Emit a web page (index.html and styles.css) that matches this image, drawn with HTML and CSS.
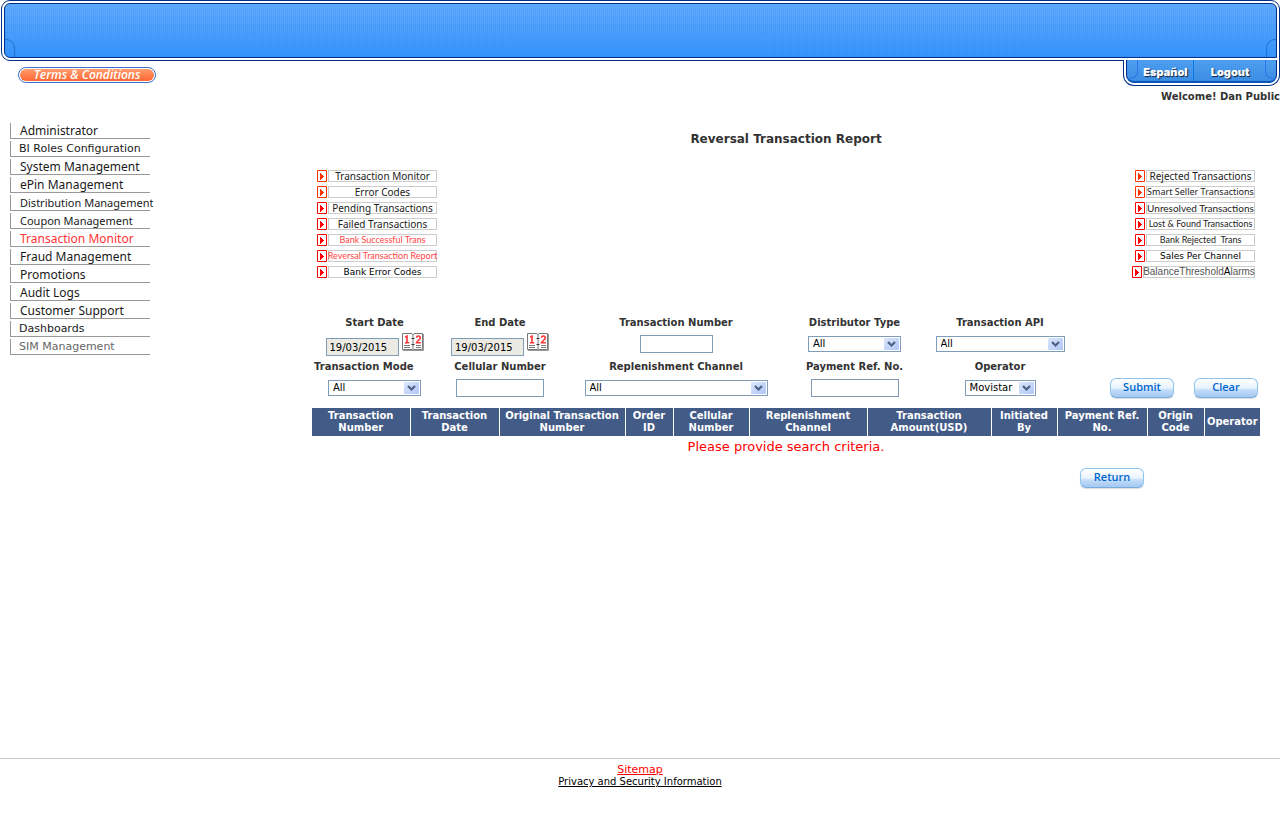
FILE: index.html
```html
<!DOCTYPE html>
<html lang="en">
<head>
<meta charset="utf-8">
<title>Reversal Transaction Report</title>
<link rel="stylesheet" href="styles.css">
</head>
<body>
<svg class="defs" aria-hidden="true">
  <symbol id="play" viewBox="0 0 10 12"><path d="M.5.5h9v11h-9z" fill="#fff" stroke="currentColor"/><path d="M3 3h1v1h1v1h1v1h1v1h-1v1h-1v1h-1v1h-1z" fill="currentColor"/></symbol>
  <symbol id="chevron" viewBox="0 0 15 12"><rect width="15" height="12" rx="1" fill="url(#arrow-face)"/><path d="M4 4l3.500 3.500L11 4" fill="none" stroke="#4d6185" stroke-width="2.200"/></symbol>
  <symbol id="calendar" viewBox="0 0 22 18">
    <path d="M1 17.500h20.500V1" fill="none" stroke="#999"/>
    <path d="M.5.5h9.500l1 1 1-1h8.500v16h-8.500l-1 1-1-1H.5z" fill="#fff" stroke="#777"/>
    <path d="M11 1v16" stroke="#777"/><path d="M9.500 5.500h3M9.500 11.500h3" stroke="#333"/>
    <path d="M3.200 4.300L5 3.200V9.500M3 9.700h4.200" fill="none" stroke="#f33" stroke-width="1.600"/>
    <path d="M14.500 4.800c.2-2.500 4-2.200 3.800.2C18.200 6.700 15 8 14.500 9.700h4.300" fill="none" stroke="#f33" stroke-width="1.600"/>
    <path d="M2 12.500h6M2 14.500h6M14 12.500h5M14 14.500h5" stroke="#777"/>
  </symbol>
  <linearGradient id="arrow-face" x2="1" y2="1"><stop stop-color="#dce6fd"/><stop offset="1" stop-color="#aec6f6"/></linearGradient>
</svg>
<header class="top">
  <div class="banner"><div class="banner-fill"><i class="notch notch-left"></i><i class="notch notch-right"></i></div></div>
  <div class="subbar">
    <a class="terms" href="#"><span>Terms &amp; Conditions</span></a>
    <div class="account">
      <nav class="tabs"><div class="tabs-fill"><a href="#">Español</a><a href="#">Logout</a></div></nav>
      <p class="welcome">Welcome! Dan Public</p>
    </div>
  </div>
</header>
<div class="layout">
  <nav class="menu">
    <a href="#">Administrator</a>
    <a href="#" class="wide">BI Roles Configuration</a>
    <a href="#">System Management</a>
    <a href="#">ePin Management</a>
    <a href="#" class="narrow">Distribution Management</a>
    <a href="#" class="narrow">Coupon Management</a>
    <a href="#" class="current">Transaction Monitor</a>
    <a href="#">Fraud Management</a>
    <a href="#">Promotions</a>
    <a href="#">Audit Logs</a>
    <a href="#">Customer Support</a>
    <a href="#" class="wide">Dashboards</a>
    <a href="#" class="wide muted">SIM Management</a>
  </nav>
  <main>
    <h1>Reversal Transaction Report</h1>
    <div class="shortcuts">
      <nav class="links">
        <a href="#" class="warm"><svg><use href="#play"/></svg><span>Transaction Monitor</span></a>
        <a href="#" class="warm"><svg><use href="#play"/></svg><span>Error Codes</span></a>
        <a href="#"><svg><use href="#play"/></svg><span>Pending Transactions</span></a>
        <a href="#"><svg><use href="#play"/></svg><span>Failed Transactions</span></a>
        <a href="#"><svg><use href="#play"/></svg><span class="slim active">Bank Successful Trans</span></a>
        <a href="#"><svg><use href="#play"/></svg><span class="slim active">Reversal Transaction Report</span></a>
        <a href="#"><svg><use href="#play"/></svg><span class="dark">Bank Error Codes</span></a>
      </nav>
      <nav class="links">
        <a href="#" class="warm"><svg><use href="#play"/></svg><span>Rejected Transactions</span></a>
        <a href="#" class="warm"><svg><use href="#play"/></svg><span class="small-text">Smart Seller Transactions</span></a>
        <a href="#"><svg><use href="#play"/></svg><span class="snug">Unresolved Transactions</span></a>
        <a href="#"><svg><use href="#play"/></svg><span class="slim">Lost &amp; Found Transactions</span></a>
        <a href="#"><svg><use href="#play"/></svg><span class="slim">Bank Rejected&nbsp; Trans</span></a>
        <a href="#"><svg><use href="#play"/></svg><span class="dark">Sales Per Channel</span></a>
        <a href="#" class="long"><svg><use href="#play"/></svg><span class="arial">BalanceThreshold<b>A</b>larms</span></a>
      </nav>
    </div>
    <form class="filters">
      <div class="field"><label for="start">Start Date</label><div class="control date"><input id="start" value="19/03/2015" readonly><button type="button" aria-label="Pick start date"><svg><use href="#calendar"/></svg></button></div></div>
      <div class="field"><label for="end">End Date</label><div class="control date"><input id="end" value="19/03/2015" readonly><button type="button" aria-label="Pick end date"><svg><use href="#calendar"/></svg></button></div></div>
      <div class="field"><label for="number">Transaction Number</label><div class="control"><input id="number"></div></div>
      <div class="field"><label for="type">Distributor Type</label><div class="control"><span class="select medium"><select id="type"><option>All</option></select><svg><use href="#chevron"/></svg></span></div></div>
      <div class="field"><label for="api">Transaction API</label><div class="control"><span class="select large"><select id="api"><option>All</option></select><svg><use href="#chevron"/></svg></span></div></div>
      <div class="field mode"><label for="mode">Transaction Mode</label><div class="control"><span class="select medium"><select id="mode"><option>All</option></select><svg><use href="#chevron"/></svg></span></div></div>
      <div class="field"><label for="cell">Cellular Number</label><div class="control"><input id="cell" class="roomy"></div></div>
      <div class="field"><label for="channel">Replenishment Channel</label><div class="control"><span class="select huge"><select id="channel"><option>All</option></select><svg><use href="#chevron"/></svg></span></div></div>
      <div class="field"><label for="payment">Payment Ref. No.</label><div class="control"><input id="payment" class="roomy"></div></div>
      <div class="field"><label for="operator">Operator</label><div class="control"><span class="select small"><select id="operator"><option>Movistar</option></select><svg><use href="#chevron"/></svg></span></div></div>
      <div class="actions"><button class="pill">Submit</button><button class="pill" type="reset">Clear</button></div>
    </form>
    <table class="results">
      <colgroup><col class="c98"><col class="c89"><col class="c126"><col class="c48"><col class="c76"><col class="c118"><col class="c124"><col class="c66"><col class="c90"><col class="c57"><col class="c56"></colgroup>
      <thead><tr><th>Transaction Number</th><th>Transaction Date</th><th>Original Transaction Number</th><th>Order ID</th><th>Cellular Number</th><th>Replenishment Channel</th><th>Transaction Amount(USD)</th><th>Initiated By</th><th>Payment Ref. No.</th><th>Origin Code</th><th>Operator</th></tr></thead>
      <tbody><tr><td colspan="11">Please provide search criteria.</td></tr></tbody>
    </table>
    <div class="back"><button class="pill">Return</button></div>
  </main>
</div>
<footer><a href="#" class="sitemap">Sitemap</a><a href="#">Privacy and Security Information</a></footer>
</body>
</html>
```
FILE: styles.css
```css
* { box-sizing: border-box; }
body { margin: 0; min-height: 100vh; display: flex; flex-direction: column; background: #fff; color: #333; font: 10px/12px Verdana, "DejaVu Sans", sans-serif; }
a { color: inherit; text-decoration: none; }
p, h1 { margin: 0; }
button { border: 0; padding: 0; background: none; font: inherit; cursor: pointer; }
svg { display: block; }
.defs { position: absolute; width: 0; height: 0; }

.banner { height: 61px; margin-left: 1px; padding: 2px; border: 1px solid #003087; border-radius: 9px 9px 0 9px; }
.banner-fill { position: relative; height: 55px; overflow: hidden; border: 1px solid #003087; border-radius: 6px 6px 0 6px; background: repeating-linear-gradient(90deg, rgba(20, 100, 215, .12) 0 1px, transparent 1px 2px), repeating-linear-gradient(rgba(20, 100, 215, .1) 0 1px, transparent 1px 2px), linear-gradient(#66b0ff, #3898ff); }
.notch { position: absolute; bottom: -1px; width: 11px; height: 19px; border: 1px solid #2372cf; }
.notch-left { left: -1px; border-radius: 0 9px 0 0; }
.notch-right { right: -1px; border-radius: 9px 0 0 0; }
.subbar { display: flex; justify-content: space-between; align-items: flex-start; height: 43px; }
.terms { width: 138px; margin: 6px 0 0 18px; padding: 1px; border: 1px solid #3b6fce; border-radius: 8px; }
.terms span { display: block; height: 12px; border-radius: 6px; background: linear-gradient(#ff9c6c, #ff6733); color: #fff; text-align: center; font: italic 600 12px/12px "Open Sans", sans-serif; }
.account { display: flex; flex-direction: column; align-items: flex-end; }
.tabs { position: relative; width: 157px; height: 26px; margin-top: -1px; padding: 0 2px 2px; border: 1px solid #003087; border-top: 0; border-radius: 0 0 11px 11px; background: #fff; }
.tabs-fill { display: flex; height: 23px; border: 1px solid #003087; border-top: 0; border-bottom: 2px solid #0c55b5; border-radius: 0 0 8px 8px; overflow: hidden; background: repeating-linear-gradient(90deg, rgba(20, 90, 200, .1) 0 1px, transparent 1px 2px), repeating-linear-gradient(rgba(20, 90, 200, .1) 0 1px, transparent 1px 2px), linear-gradient(#54a5f4, #4093e6); }
.tabs a { flex: 84px 0 0; padding-right: 12px; color: #fff; text-align: center; text-shadow: 1px 1px 1px #124; font: 900 11px/24px "Inter", "Liberation Sans", sans-serif; }
.tabs a:first-child { flex: 67px 0 0; padding: 0 0 0 11px; border-right: 1px solid #0b78e8; }
.tabs-fill::before, .tabs-fill::after { content: ""; position: absolute; top: 0; width: 10px; height: 18px; border: 1px solid #2b72f0; border-top: 0; }
.tabs-fill::before { left: 3px; border-left: 0; border-radius: 0 0 8px 0; }
.tabs-fill::after { right: 3px; border-right: 0; border-radius: 0 0 0 8px; }
.welcome { margin-top: 5px; font-weight: bold; }

.layout { flex: 1; display: flex; padding: 19px 20px 20px 10px; }
.menu { flex: 0 0 140px; min-width: 0; display: flex; flex-direction: column; gap: 2px; }
.menu a { height: 16px; padding-left: 9px; border: solid #999; border-width: 0 0 1px 1px; color: #1a1a1a; font: 12px/16px "Noto Sans", sans-serif; white-space: nowrap; }
.menu .wide { padding-left: 8px; font: 11px/15px Verdana, "DejaVu Sans", sans-serif; }
.menu .narrow { font-size: 11px; }
.menu .current { color: #f33; }
.menu .muted { color: #666; }
main { flex: 1; min-width: 0; margin-left: 162px; }
h1 { margin-top: 8px; text-align: center; font-size: 12px; line-height: 16px; }
.shortcuts { display: flex; justify-content: space-between; margin-top: 23px; padding: 0 5px; }
.links { width: 120px; display: flex; flex-direction: column; align-items: flex-end; gap: 4px; color: #222; }
.links a { width: 120px; height: 12px; display: flex; gap: 1px; white-space: nowrap; }
.links .long { width: 123px; }
.links svg { flex: none; width: 10px; height: 12px; color: #f00; }
.links .warm svg { color: #f30; }
.links span { flex: 1; min-width: 0; display: flex; justify-content: center; border: 1px solid #ccc; font: 10px/10px "Noto Sans", sans-serif; }
.links .small-text { font-size: 9px; }
.links .snug { font: 10px/10px Lato, sans-serif; }
.links .slim { font: 9px/10px Lato, sans-serif; }
.links .active { color: #f44; }
.links .dark { color: #000; font: 9px/11px Verdana, "DejaVu Sans", sans-serif; }
.links .arial { color: #555; font: 10px/10px "Liberation Sans", sans-serif; }
.arial b { color: #000; font-weight: normal; }

.filters { display: grid; grid-template-columns: 125fr 126fr 226fr 131fr 160fr 180fr; row-gap: 2px; margin-top: 38px; }
.field { display: flex; flex-direction: column; align-items: center; }
.field label { line-height: 14px; font-weight: bold; white-space: nowrap; }
.mode { grid-column: 1; }
.mode label { align-self: flex-start; margin-left: 2px; }
.control { height: 28px; display: flex; align-items: center; }
.date { align-items: flex-start; gap: 3px; padding-top: 3px; }
.date input { margin-top: 5px; background: #ebebe4; }
.date svg { width: 22px; height: 18px; }
input { width: 73px; height: 18px; padding: 0 3px; border: 1px solid #7f9db9; border-radius: 0; background: #fff; color: #000; font: inherit; }
.roomy { width: 88px; }
.select { position: relative; display: block; }
.select svg { position: absolute; top: 2px; right: 2px; width: 15px; height: 12px; pointer-events: none; }
select { display: block; width: 100%; height: 16px; padding: 0 4px; border: 1px solid #7f9db9; border-radius: 0; appearance: none; background: #fff; color: #000; font: inherit; }
.small { width: 71px; }
.medium { width: 93px; }
.large { width: 129px; }
.huge { width: 183px; }
.actions { display: flex; gap: 20px; justify-content: flex-end; align-items: flex-end; padding: 0 2px 4px 0; }
.pill { width: 64px; height: 20px; padding-bottom: 3px; border: 1px solid #8ec5ee; border-bottom-color: #79aadb; border-radius: 6px; background: linear-gradient(#fff, #e9f3fd 50%, #c4ddf9 60%, #a3c8f1); box-shadow: 0 1px 1px #ddd; color: #06c; font: 600 11px/15px "Open Sans", sans-serif; }

.results { width: 100%; margin-top: 6px; table-layout: fixed; border-collapse: collapse; }
.results th { padding: 2px 0; border-left: 1px solid #fff; background: #435b87; color: #fff; line-height: 12px; }
.results th:first-child { border-left: 0; }
.results td { padding: 3px 0; color: #f00; text-align: center; font-size: 13px; line-height: 16px; }
.c98 { width: 98px; } .c89 { width: 89px; } .c126 { width: 126px; } .c48 { width: 48px; } .c76 { width: 76px; } .c118 { width: 118px; } .c124 { width: 124px; } .c66 { width: 66px; } .c90 { width: 90px; } .c57 { width: 57px; } .c56 { width: 56px; }
.back { display: flex; justify-content: flex-end; margin-top: 10px; padding-right: 116px; }
footer { display: flex; flex-direction: column; align-items: center; padding: 5px 0 31px; border-top: 1px solid #ccc; color: #000; }
footer a { text-decoration: underline; }
.sitemap { color: #f00; font-size: 11px; }
```
